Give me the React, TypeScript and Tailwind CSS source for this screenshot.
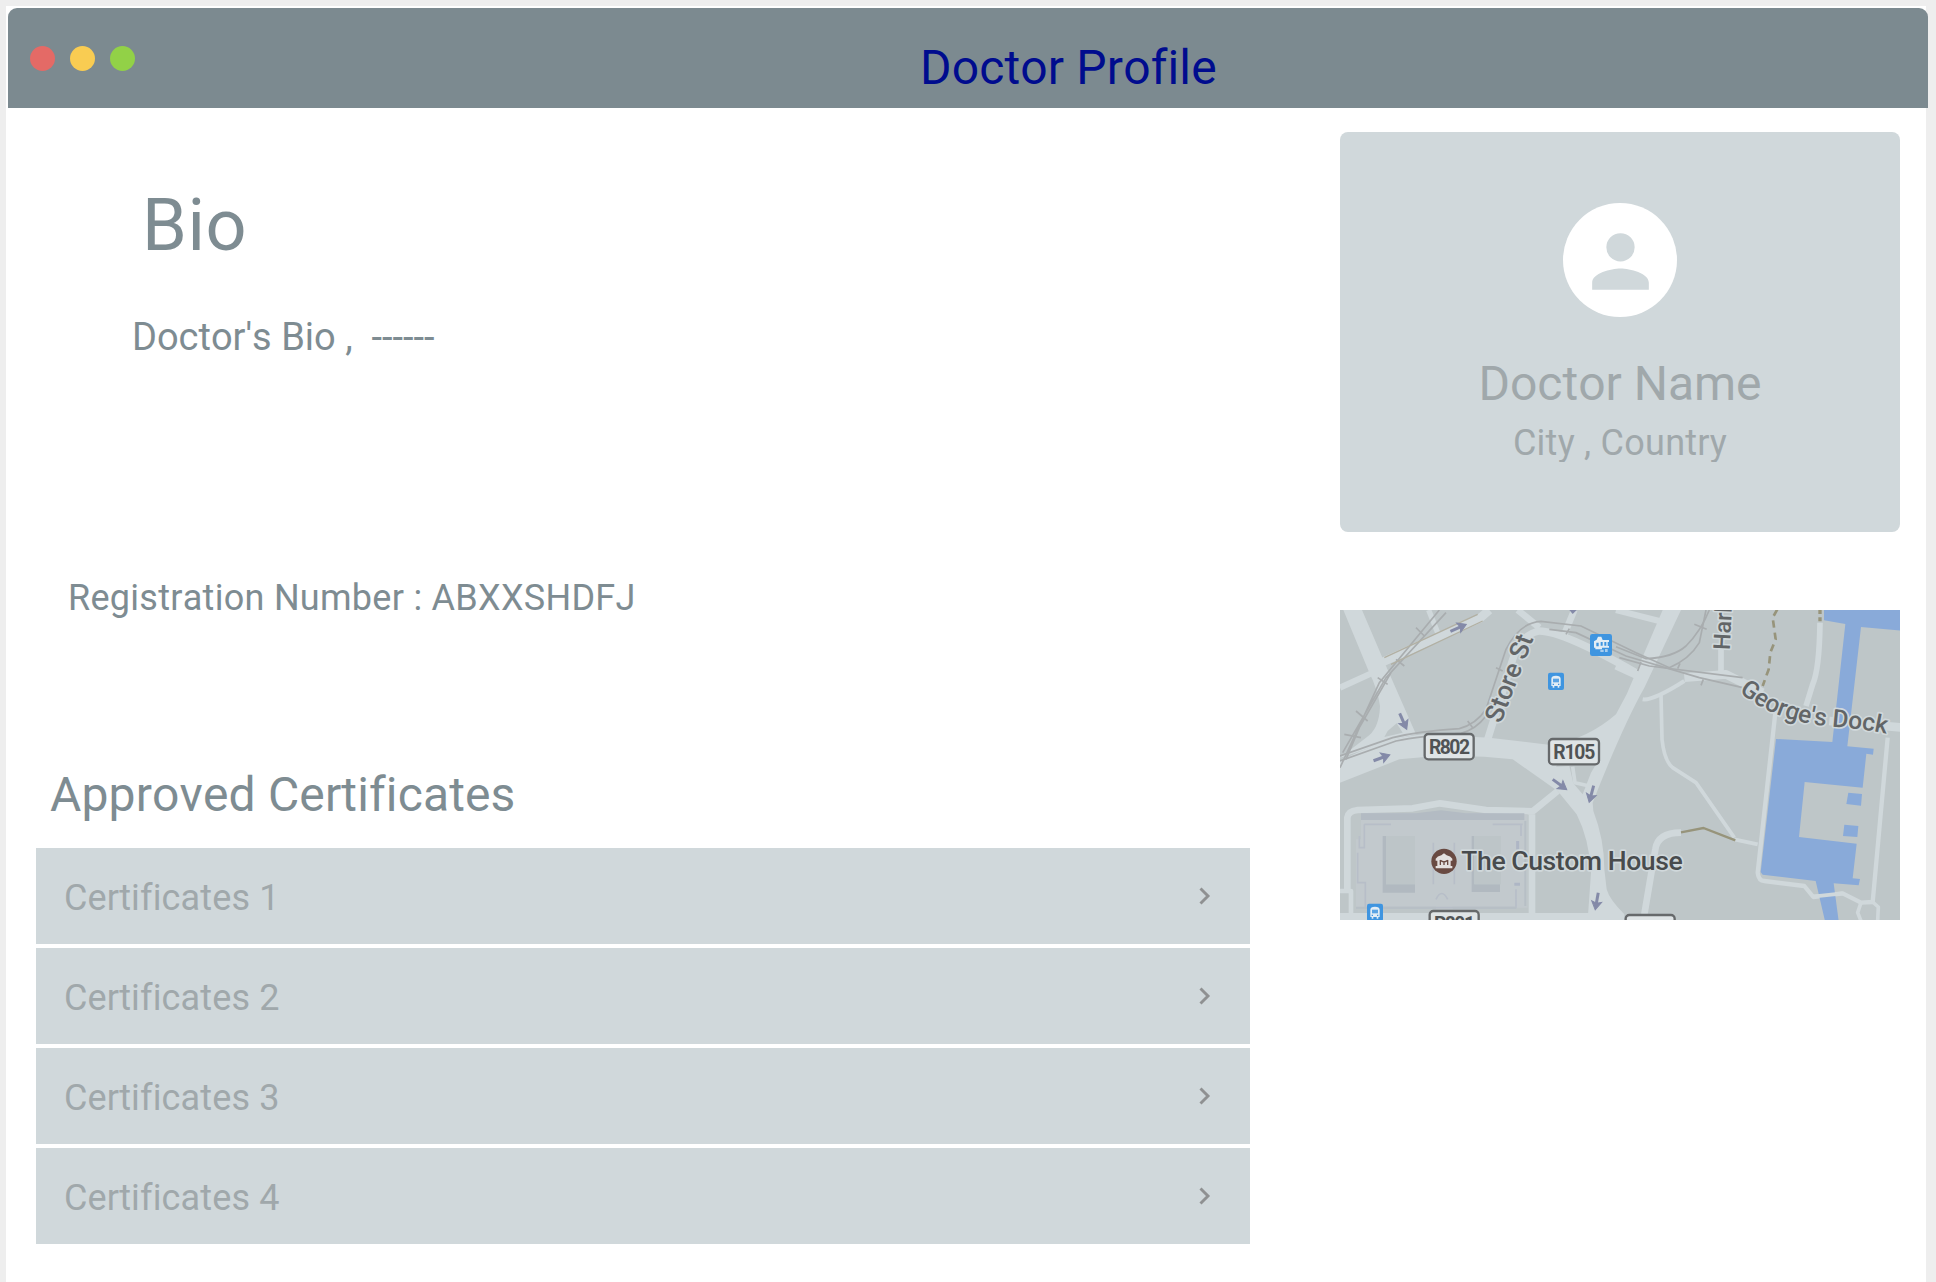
import React from "react";

const certificates = ["Certificates 1", "Certificates 2", "Certificates 3", "Certificates 4"];

function Arrow({ x, y, r }: { x: number; y: number; r: number }) {
  return (
    <g transform={`translate(${x} ${y}) rotate(${r})`} stroke="#848aa8" fill="#848aa8">
      <path d="M-27 0H8" strokeWidth="9" />
      <path d="M0-15L25 0L0 15L5 0Z" strokeWidth="3" />
    </g>
  );
}

function Shield({ x, y, w, label }: { x: number; y: number; w: number; label?: string }) {
  return (
    <g>
      <rect x={x} y={y} width={w} height="76" rx="11" fill="#dfe4e6" stroke="#66696b" strokeWidth="7" />
      {label && (
        <text x={x + w / 2 + 1} y={y + 60} textAnchor="middle" fontSize="58" fontWeight="700" fill="#505355" textLength={w - 24}>
          {label}
        </text>
      )}
    </g>
  );
}

function Bus({ x, y }: { x: number; y: number }) {
  return (
    <g transform={`translate(${x} ${y})`}>
      <rect width="48" height="52" rx="6" fill="#3f95e0" />
      <path d="M10 40V18Q10 9 24 9T38 18V40H34V45H29V40H19V45H14V40Z" fill="#e3edf5" />
      <path d="M15 18H33V29H15Z" fill="#5ba4e4" />
      <path d="M14 33H18V37H14ZM30 33H34V37H30Z" fill="#3f95e0" />
    </g>
  );
}

function CityMap() {
  return (
    <svg viewBox="12 12 1680 930" className="block h-[310px] w-[560px] shrink-0" preserveAspectRatio="none" fontFamily="Roboto, sans-serif">
      <defs>
        <path id="dock" d="M1209 257Q1318 348 1480 361T1690 396" />
      </defs>
      <rect x="12" y="12" width="1680" height="930" fill="#bec6c8" />

      {/* minor roads */}
      <g fill="none" stroke="#d0d8db" strokeLinejoin="round">
        <path d="M12 245L110 200" strokeWidth="18" />
        <path d="M278 12L305 80" strokeWidth="16" />
        <path d="M140 168L430 38L460 12" strokeWidth="26" />
        <path d="M545 12L610 65M715 12L685 85" strokeWidth="20" />
        <path d="M455 400L530 160Q555 85 610 75Q680 75 900 200" strokeWidth="22" />
        <path d="M34 860V635Q36 615 65 612L230 607L312 592L450 612L590 616L665 555" strokeWidth="20" />
        <path d="M588 625V925" strokeWidth="20" />
        <path d="M12 855H45V925" strokeWidth="14" />
        <path d="M12 934H860" strokeWidth="26" />
      </g>
      <g fill="none" stroke="#d0d8db" strokeLinejoin="round" transform="translate(840 0)">
        <path d="M0 12L130 45" strokeWidth="18" />
        <path d="M0 180L70 212" strokeWidth="22" />
        <path d="M315 120V205" strokeWidth="17" />
        <path d="M205 215L330 205L440 260M640 345L860 365" strokeWidth="26" />
        <path d="M80 280Q110 285 205 225" strokeWidth="12" />
        <path d="M135 265L138 400Q145 465 170 485L240 530L355 695" strokeWidth="11" />
        <path d="M85 925L118 730Q125 680 195 680" strokeWidth="20" />
        <path d="M355 700L425 715" strokeWidth="12" />
        <path d="M612 50Q610 190 590 235L570 300" strokeWidth="17" />
        <path d="M478 320L425 800Q428 825 445 825L565 840L592 873L680 862L735 890L770 888L815 395" strokeWidth="13" />
        <path d="M735 890L725 920L735 945M770 888L787 903L785 945" strokeWidth="11" />
      </g>

      {/* main roads */}
      <g fill="#d0d8db">
        <path d="M22 12H78L150 180L240 385L180 400L12 455L90 395Q130 370 132 300Q125 250 100 200Z" />
        <path d="M12 465Q150 395 260 385L460 395L650 418Q760 395 840 325L872 265L980 12H1035L925 245Q860 360 770 590L772 615Q805 700 805 790L812 850Q820 880 865 925V942H755L765 800Q760 700 722 625L665 555L530 460Q360 440 190 460L12 530Z" />
      </g>
      <path d="M660 482L700 480L712 532L740 565L765 500L780 475H665Z" fill="#bec6c8" />
      <path d="M710 482L717 530L760 540" fill="none" stroke="#d0d8db" strokeWidth="11" />
      <path d="M155 375L182 352L200 380L145 393Z" fill="#bec6c8" />

      {/* rail lines */}
      <g fill="none" stroke="#a9adaf" strokeWidth="5">
        <path d="M12 450L170 395Q250 375 370 368Q420 355 450 310L510 130Q550 50 615 46L735 60L900 140L1000 185Q1060 160 1090 110L1110 12" />
        <path d="M12 465L180 405Q250 390 375 382Q420 370 450 330M640 70L720 80L870 150L1090 215L1220 245" />
        <path d="M12 485L130 230L310 12M20 440L150 215L330 20M30 460L70 365L165 200M840 122L930 158Q1010 155 1050 120Q1095 75 1120 12M850 155L940 180L1220 215" />
        <path d="M60 315L95 345M25 385L75 395M125 215L155 235M180 160L205 180M240 65L265 90M480 185L500 195M395 345L410 365M905 195L915 168M1025 188L1032 172M1095 238L1102 220M1075 55L1112 70M690 85L700 68" />
      </g>
      <path d="M145 155L425 25M165 175L440 45" fill="none" stroke="#b2b0a3" strokeWidth="4" />

      {/* footpaths */}
      <g fill="none" stroke="#97947b" strokeWidth="8" transform="translate(840 0)">
        <path d="M195 679L262 666L358 703" strokeWidth="7" />
        <path d="M484 10L470 35L479 100L463 140L458 190L440 240" strokeDasharray="22 15" />
        <path d="M612 12V48" strokeWidth="10" strokeDasharray="12 10" />
      </g>

      {/* Custom House complex */}
      <g>
        <path d="M75 625H240L315 615L390 625H575V905H60V700H75Z" fill="#c2c9cd" />
        <path d="M75 622H240L315 613L390 622H565V642H75Z" fill="#b3bbc3" />
        <path d="M140 690H150V835H237V860H140ZM407 690H415V835H492V858H407Z" fill="#b1b9c0" />
        <path d="M150 690H237V835H150ZM415 690H495V835H415Z" fill="#bdc5c8" />
        <path d="M85 655H165M470 655H560M70 690V725H85V655M65 740V830H88V905H540V850M555 655V690M300 880Q317 845 335 880M292 710V835M355 710V835" fill="none" stroke="#b7bec8" strokeWidth="5" />
        <path d="M568 645V900M60 905H300M350 905H540" fill="none" stroke="#b7bfc5" strokeWidth="6" />
        <path d="M545 705V730M535 835H552" fill="none" stroke="#aeb6c5" strokeWidth="9" />
      </g>

      {/* water */}
      <g fill="#89aad9" transform="translate(840 0)">
        <path d="M624 8H856V74L735 63L694 421L773 428L771 446L751 443L740 545L566 528L549 693L722 713L710 817L732 819L728 838L653 832L668 945H627L599 825L440 806L434 798L480 399L649 408L688 54L624 43Z" />
        <path d="M697 560L738 564L735 599L691 594ZM685 656L727 660L724 693L681 690Z" />
      </g>
      <path d="M1430 872L1520 862" stroke="#d0d8db" strokeWidth="11" />

      <Arrow x={368} y={65} r={-24} />
      <Arrow x={202} y={347} r={66} />
      <Arrow x={138} y={455} r={-20} />
      <Arrow x={672} y={536} r={36} />
      <Arrow x={766} y={565} r={105} />
      <Arrow x={782} y={887} r={100} />
      <path d="M700 12H722L710 24Z" fill="#848aa8" />

      <Shield x={266} y={384} w={147} label="R802" />
      <Shield x={639} y={399} w={150} label="R105" />
      <Shield x={281} y={915} w={147} label="R801" />
      <Shield x={869} y={927} w={147} />

      {/* transit stops */}
      <Bus x={636} y={200} />
      <Bus x={93} y={893} />
      <g transform="translate(762 84)">
        <rect width="66" height="66" rx="7" fill="#3f95e0" />
        <path d="M12 22L20 17L24 8H34L38 18H57V24H53V36H57V41H36V46H16V41H12Z" fill="#e3edf5" />
        <path d="M19 26H26V37H19ZM32 24H38V35H32ZM43 24H49V35H43Z" fill="#3f95e0" />
        <path d="M31 47H41V54H31ZM45 45H53V54H45Z" fill="#a8cdee" />
      </g>

      {/* museum marker */}
      <g transform="translate(324 766)">
        <circle r="38" fill="#694a42" />
        <path d="M-25-8Q-20-16-8-18L0-24L8-18Q20-16 25-8V-2H20V14H25V21H-25V14H-20V-2H-25Z" fill="#e4e0df" />
        <path d="M-11-4V11M0-1V11M11-4V11M-11-3L0 3L11-3" fill="none" stroke="#694a42" strokeWidth="4" />
      </g>

      {/* place names */}
      <g stroke="#d0d8db" strokeWidth="10" strokeLinejoin="round" paintOrder="stroke">
        <text x="376" y="792" fontSize="80" fontWeight="500" fill="#484b4d" textLength="664">The Custom House</text>
        <text transform="translate(494 355) rotate(-69)" fontSize="78" fontWeight="500" fill="#626567" textLength="276">Store St</text>
        <text transform="translate(1181 133) rotate(-87)" fontSize="70" fontWeight="500" fill="#626567">Harbour</text>
        <text fontSize="74" fontWeight="500" fill="#626567">
          <textPath href="#dock" textLength="467">George's Dock</textPath>
        </text>
      </g>
    </svg>
  );
}

export default function App() {
  return (
    <div className="h-[1282px] w-[1936px] overflow-hidden bg-[#eeeeee] pt-1.5 pl-1.5 font-[Roboto,sans-serif] text-[#7e8c92] [font-kerning:none] [font-variant-ligatures:none]">
      <div className="h-full w-[1920px] bg-white pt-0.5">
        <header className="relative ml-0.5 flex h-[100px] w-[1920px] items-center rounded-t-[9px] bg-[#7c8a90] pl-[22px]">
          <div className="flex gap-[15px]">
            <span className="size-[25px] rounded-full bg-[#e46a66]" />
            <span className="size-[25px] rounded-full bg-[#f9cc52]" />
            <span className="size-[25px] rounded-full bg-[#92d147]" />
          </div>
          <h1 className="mt-5 ml-[785px] text-[48px] leading-none tracking-[0.15px] whitespace-nowrap text-[#000c8e]">Doctor Profile</h1>
        </header>

        <div className="flex items-start">
          <main className="ml-[30px] w-[1214px] pt-[82px]">
            <h2 className="ml-[106px] text-[72px] leading-none tracking-[0.6px]">Bio</h2>
            <p className="mt-[56px] ml-24 text-[38px] leading-none whitespace-pre">Doctor's Bio ,  ------</p>
            <p className="mt-[224px] ml-8 text-[36px] leading-none tracking-[0.28px] whitespace-nowrap">Registration Number : ABXXSHDFJ</p>
            <h3 className="mt-[155px] ml-[14px] text-[48px] leading-none tracking-[0.15px] whitespace-nowrap">Approved Certificates</h3>
            <ul className="mt-[29px] flex flex-col gap-1">
              {certificates.map((name) => (
                <li key={name} className="flex h-24 items-center justify-between bg-[#d0d8db] pr-[39px] pl-7 text-[36px] leading-none tracking-[0.15px] text-[#a0a8ab]">
                  <span className="pt-1">{name}</span>
                  <svg viewBox="0 0 12 18" className="h-[18px] w-3" fill="none" stroke="#8f9192" strokeWidth="2.9">
                    <path d="M1.5 1.5L9 9L1.5 16.5" />
                  </svg>
                </li>
              ))}
            </ul>
          </main>

          <aside className="ml-[90px] flex w-[560px] flex-col gap-[78px] pt-6">
            <section className="flex h-[400px] flex-col items-center rounded-lg bg-[#d0d8db] pt-[71px] text-[#a0a8ab]">
              <div className="flex size-[114px] items-center justify-center rounded-full bg-white">
                <svg viewBox="0 0 24 24" className="mt-[3px] size-[85px]" fill="#d0d8db">
                  <path d="M12 12a4 4 0 1 0 0-8 4 4 0 0 0 0 8zm0 2c-2.67 0-8 1.34-8 4v2h16v-2c0-2.66-5.33-4-8-4z" />
                </svg>
              </div>
              <h2 className="mt-[43px] text-[48px] leading-none">Doctor Name</h2>
              <p className="mt-[17px] h-[37px] overflow-hidden text-[36px] leading-none tracking-[0.25px]">City , Country</p>
            </section>
            <CityMap />
          </aside>
        </div>
      </div>
    </div>
  );
}
